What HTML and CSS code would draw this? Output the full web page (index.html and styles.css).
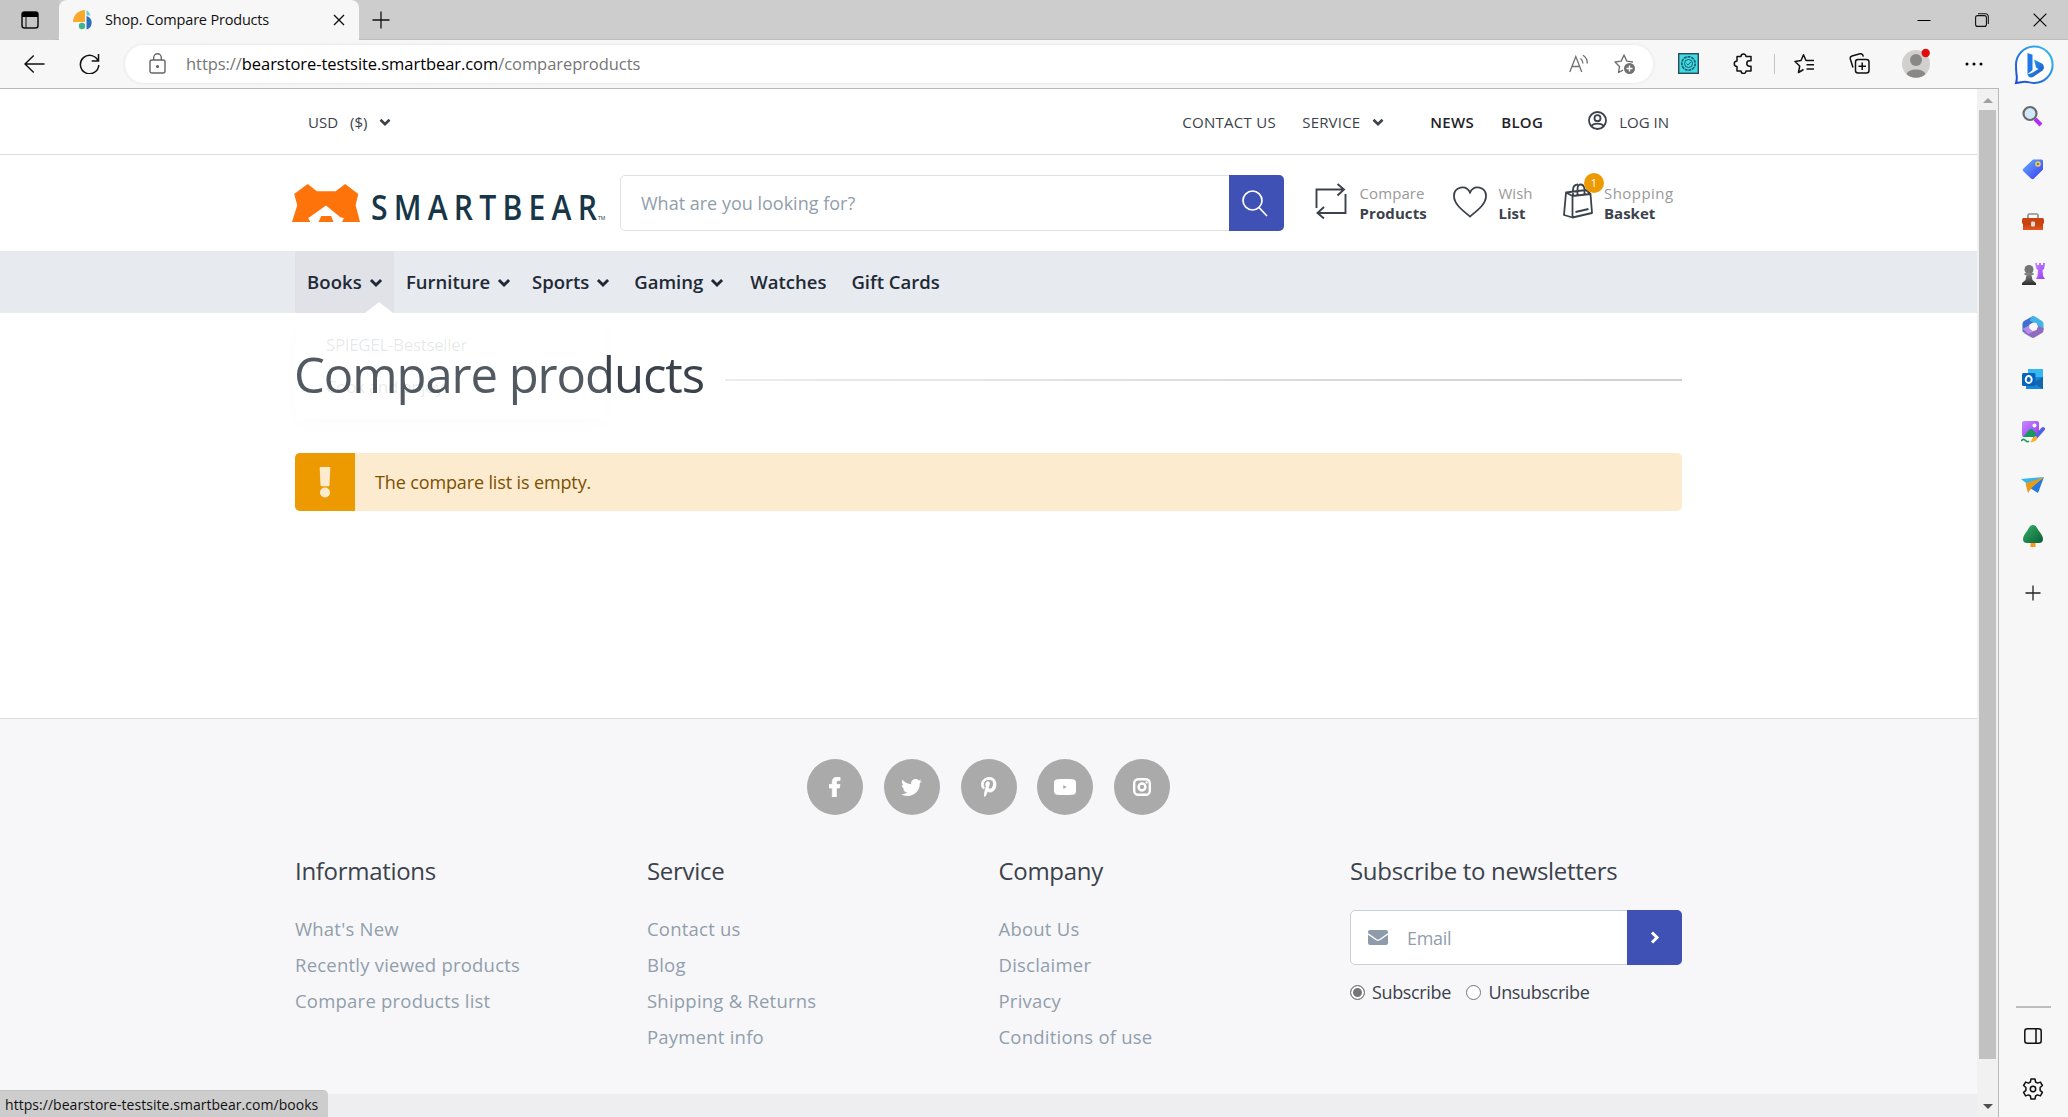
FILE: index.html
```html
<!DOCTYPE html>
<html lang="en">
<head>
<meta charset="utf-8">
<title>Shop. Compare Products</title>
<link rel="stylesheet" href="styles.css">
</head>
<body>
<svg class="defs" aria-hidden="true">
  <defs>
    <symbol id="chev" viewBox="0 0 12 8"><path d="M1.500 1.800 6 6.200l4.500-4.400" fill="none" stroke="currentColor" stroke-width="2.600"/></symbol>
    <linearGradient id="gBing" x1="0" y1="0" x2="1" y2="1"><stop offset="0" stop-color="#1fb6f5"/><stop offset="1" stop-color="#2443c8"/></linearGradient>
    <linearGradient id="gBingRing" x1="1" y1="0" x2="0" y2="1"><stop offset="0" stop-color="#35c3f3"/><stop offset="1" stop-color="#1b48d0"/></linearGradient>
    <linearGradient id="gBlue" x1="0" y1="0" x2="1" y2="1"><stop offset="0" stop-color="#67b4ff"/><stop offset="1" stop-color="#3a36f0"/></linearGradient>
    <linearGradient id="gPurple" x1="0" y1="0" x2="1" y2="1"><stop offset="0" stop-color="#c58bff"/><stop offset="1" stop-color="#9a35f5"/></linearGradient>
    <linearGradient id="gGreen" x1="0" y1="0" x2="1" y2="1"><stop offset="0" stop-color="#35b368"/><stop offset="1" stop-color="#0a5c35"/></linearGradient>
    <linearGradient id="gRed" x1="0" y1="0" x2="0" y2="1"><stop offset="0" stop-color="#b93a0b"/><stop offset="1" stop-color="#e8571d"/></linearGradient>
    <linearGradient id="gGrey" x1="0" y1="0" x2="0" y2="1"><stop offset="0" stop-color="#8a8a8a"/><stop offset="1" stop-color="#2c2c2c"/></linearGradient>
  </defs>
</svg>

<header class="tabstrip">
  <div class="workspace"><svg width="18" height="18" viewBox="0 0 18 18"><rect x="1" y="1" width="16" height="16" rx="2.500" fill="none" stroke="#111" stroke-width="1.500"/><path d="M1 3.500A2.500 2.500 0 0 1 3.500 1h11A2.500 2.500 0 0 1 17 3.500V6H1z"/><path d="M5 6v11" stroke="#111" stroke-width="1"/></svg></div>
  <div class="tab">
    <svg width="20" height="20" viewBox="0 0 20 20"><path d="M12 0v12H0A12 12 0 0 1 12 0z" fill="#fba92c"/><path d="M13.500 0a8 8 0 0 1 4 5.500h-4z" fill="#67cdd8"/><path d="M13.500 6a7 7 0 0 1 0 13.500z" fill="#2c6fbb"/><circle cx="9" cy="16" r="3.200" fill="#41b58a"/></svg>
    <span class="tab-title">Shop. Compare Products</span>
    <svg width="12" height="12" viewBox="0 0 12 12"><path d="m1 1 10 10M11 1 1 11" stroke="#111" stroke-width="1.400"/></svg>
  </div>
  <svg class="newtab" width="18" height="18" viewBox="0 0 18 18"><path d="M9 .5v17M.5 9h17" stroke="#111" stroke-width="1.300"/></svg>
  <div class="window-buttons">
    <svg width="14" height="14" viewBox="0 0 14 14"><path d="M.5 7.500h13" stroke="#000"/></svg>
    <svg width="14" height="14" viewBox="0 0 14 14" fill="none" stroke="#111" stroke-width="1.100"><rect x=".6" y="2.600" width="10.800" height="10.800" rx="2"/><path d="M3 .8h7.500a2.800 2.800 0 0 1 2.800 2.800V11"/></svg>
    <svg width="14" height="14" viewBox="0 0 14 14"><path d="m.6.600 12.800 12.800M13.400.600.600 13.400" stroke="#000" stroke-width="1.100"/></svg>
  </div>
</header>

<div class="toolbar">
  <svg width="21" height="20" viewBox="0 0 21 20" fill="none" stroke="#111" stroke-width="1.400"><path d="M20.500 10H1M9.700 1.500 1 10l8.700 8.500"/></svg>
  <svg class="reload" width="21" height="21" viewBox="0 0 21 21" fill="none" stroke="#111" stroke-width="1.500"><path d="M19.300 8.500a9.200 9.200 0 1 0 .5 3.500M19.500 1v7h-6.800"/></svg>
  <div class="omnibox">
    <svg width="17" height="21" viewBox="0 0 17 21" fill="none" stroke="#666" stroke-width="1.400"><rect x="1" y="7" width="15" height="13" rx="2"/><path d="M4.700 7V4.600a3.800 3.800 0 0 1 7.600 0V7"/><circle cx="8.500" cy="13.500" r=".9" fill="#666"/></svg>
    <span class="url">https://<b>bearstore-testsite.smartbear.com</b>/compareproducts</span>
    <svg width="20" height="20" viewBox="0 0 20 20" fill="none" stroke="#707070" stroke-width="1.300"><path d="m.8 18 6-15.500L12.800 18M3 12.500h7.700M11.500 4.500a6 6 0 0 1 2.500 5M14 1.200a9.500 9.500 0 0 1 4.300 8.300"/></svg>
    <svg class="fav" width="22" height="21" viewBox="0 0 22 21" fill="none" stroke="#707070" stroke-width="1.400" stroke-linejoin="round"><path d="M9 17.200 4.500 19.500l1-6L1 9l6.200-.9L10 2l2.800 6.100L19 9"/><circle cx="15.500" cy="15.500" r="5.500" fill="#707070" stroke="none"/><path d="M15.500 12.500v6M12.500 15.500h6" stroke="#fff"/></svg>
  </div>
  <div class="actions">
    <svg class="ext" width="21" height="21" viewBox="0 0 21 21"><rect x=".7" y=".7" width="19.600" height="19.600" fill="#3fdae2" stroke="#2b4a5c" stroke-width="1.400"/><circle cx="10.500" cy="10.500" r="6.700" fill="none" stroke="#16596a" stroke-width="1.600" stroke-dasharray="3 .8"/><circle cx="10.500" cy="10.500" r="4" fill="none" stroke="#16596a"/><path d="m8.500 10.500 1.500 1.500 2.800-3" fill="none" stroke="#16596a"/></svg>
    <svg class="puzzle" width="21" height="21" viewBox="0 0 21 21" fill="none" stroke="#111" stroke-width="1.500" stroke-linejoin="round"><path d="M8 3.500a2.500 2.500 0 0 1 5 0h5v4.300h-1.500a2.700 2.700 0 0 0 0 5.400H18V18h-5a2.500 2.500 0 0 1-5 0H4v-4.500a2.600 2.600 0 0 1 0-5.500V3.500z"/></svg>
    <i class="divider"></i>
    <svg class="favs" width="21" height="21" viewBox="0 0 21 21" fill="none" stroke="#111" stroke-width="1.500" stroke-linejoin="round"><path d="m9.500 16.500-5 3 1.200-6.500L1 8.500l6-1L9.500 1.800 12 7.500h8M12.500 11.800H20M12.500 16H20"/></svg>
    <svg class="coll" width="21" height="21" viewBox="0 0 21 21" fill="none" stroke="#111" stroke-width="1.500"><rect x="6.500" y="6.500" width="13.500" height="13.500" rx="2.500"/><path d="M13.200 9.500v7.500M9.500 13.200H17M4 14.500 1.300 6A2.500 2.500 0 0 1 3 3l8-2.200a2.400 2.400 0 0 1 3 1.800l.3 1"/></svg>
    <svg class="avatar" width="28" height="30" viewBox="0 0 28 30"><circle cx="14" cy="16" r="14" fill="#d2d0ce"/><circle cx="14" cy="12" r="6" fill="#8a8886"/><path d="M4.500 26a9.800 6 0 0 1 19 0A14 14 0 0 1 4.500 26z" fill="#8a8886"/><circle cx="23.700" cy="5" r="4.200" fill="#e00b0b"/></svg>
    <svg class="dots" width="18" height="4" viewBox="0 0 18 4"><circle cx="2" cy="2" r="1.500"/><circle cx="9" cy="2" r="1.500"/><circle cx="16" cy="2" r="1.500"/></svg>
    <svg class="bing" width="40" height="40" viewBox="0 0 40 40"><path d="M2 38c1-3 1-6 .5-9-.4-3-.5-5-.5-9.500A18.300 18.300 0 1 1 20.500 38c-4 0-8-2-12-1z" fill="#fff" stroke="url(#gBingRing)" stroke-width="2"/><path d="m13.500 8 5 1.700v15.500l-5 3.800z" fill="#1f78e8"/><path d="m20 14.500 8 4c2.500 2 2.500 5 .5 7l-9.500 6.500c-2.500 1.300-5.500-.5-5.500-3 5 0 7-3 11-5l-2.500-1.500z" fill="url(#gBing)"/></svg>
  </div>
</div>

<div class="window">
<main class="page">
  <div class="topbar"><div class="container">
    <span class="currency">USD<span class="symbol">($)</span><svg width="12" height="8"><use href="#chev"/></svg></span>
    <nav class="topnav">
      <a class="t-contact">CONTACT US</a>
      <a class="t-service">SERVICE <svg width="12" height="8"><use href="#chev"/></svg></a>
      <a class="strong t-news">NEWS</a>
      <a class="strong t-blog">BLOG</a>
      <a class="t-login"><svg width="19" height="19" viewBox="0 0 19 19" fill="none" stroke="currentColor" stroke-width="1.800"><circle cx="9.500" cy="9.500" r="8.500"/><circle cx="9.500" cy="7.200" r="3"/><path d="M3.500 15.200c1-2.200 2.800-2.600 6-2.600s5 .4 6 2.600"/></svg>LOG IN</a>
    </nav>
  </div></div>

  <div class="shopbar"><div class="container">
    <div class="logo">
      <svg class="bear" width="68" height="38" viewBox="28 101 156 115" preserveAspectRatio="none"><path fill="#ff730b" d="M64 101 85 123h43l22-22 30 30-6 34 10 51h-41l4-12-8-2-33-36-38 36-3 2 5 12H28l12-51-7-34z"/><path fill="#ff730b" d="M95 198h23l5 18H89z"/></svg>
      <svg class="wordmark" width="236" height="36" viewBox="0 0 236 36"><text class="brand" transform="scale(.9 1)" x="0" y="32" textLength="251">SMARTBEAR</text><text class="tm" x="227" y="32">TM</text></svg>
    </div>
    <div class="search"><span class="placeholder">What are you looking for?</span><span class="search-btn"><svg width="26" height="27" viewBox="0 0 26 27" fill="none" stroke="#fff" stroke-width="1.700"><circle cx="10.500" cy="10.500" r="9.500"/><path d="m17 17.500 8 8.500"/></svg></span></div>
    <div class="tools">
      <a class="tool compare"><svg width="32" height="36" viewBox="0 0 32 36" fill="none" stroke="#3b424b" stroke-width="1.900"><path d="M1.500 25V6.500h27M22.500 1l6.500 5.500-6.500 6M30.500 11v19H3M9 24l-6.500 6L9 35.500"/></svg><span class="label"><small>Compare</small><b>Products</b></span></a>
      <a class="tool wish"><svg width="34" height="32" viewBox="0 0 34 32" fill="none" stroke="#3b424b" stroke-width="1.800"><path d="M17 30.500C9 24 1 18 1 10 1 1 13-2 17 6.500 21-2 33 1 33 10c0 8-8 14-16 20.500z"/></svg><span class="label"><small>Wish</small><b>List</b></span></a>
      <a class="tool basket"><svg width="30" height="36" viewBox="0 0 30 36" fill="none" stroke="#3b424b" stroke-width="1.800" stroke-linejoin="round"><path d="m3 9.500 20-2.500 4.500 4L29 30 9.500 34.500 1 32zM3 9.500l6.500 3.500V34.500M9.500 13l18-2M10 12V7c0-4 2-5.500 5-5.500M14.500 12V6c0-6 6-6 7 0v5M12.500 29l13-3"/></svg><span class="label"><small>Shopping</small><b>Basket</b></span><i class="badge">1</i></a>
    </div>
  </div></div>

  <nav class="menu"><div class="container">
    <div class="menu-item active">Books<svg width="14" height="9"><use href="#chev"/></svg>
      <i class="caret"></i>
      <div class="dropdown"><span>SPIEGEL-Bestseller</span><span>Cook and enjoy</span></div>
    </div>
    <div class="menu-item furniture">Furniture<svg width="14" height="9"><use href="#chev"/></svg></div>
    <div class="menu-item">Sports<svg width="14" height="9"><use href="#chev"/></svg></div>
    <div class="menu-item">Gaming<svg width="14" height="9"><use href="#chev"/></svg></div>
    <div class="menu-item watches">Watches</div>
    <div class="menu-item gift">Gift Cards</div>
  </div></nav>

  <section class="content container">
    <div class="heading"><h1>Compare products</h1><i class="rule"></i></div>
    <div class="alert"><span class="alert-icon"><svg width="12" height="32" viewBox="0 0 12 32" fill="#fdebcf"><path d="M1.700 1h8.600a1 1 0 0 1 1 1l-.8 17a1.200 1.200 0 0 1-1.200 1.200H2.700A1.200 1.200 0 0 1 1.500 19L.7 2a1 1 0 0 1 1-1z"/><circle cx="6" cy="26.500" r="5"/></svg></span><span class="alert-text">The compare list is empty.</span></div>
  </section>

  <footer class="footer">
    <div class="social">
      <span><svg width="12" height="20" viewBox="0 0 12 20"><path d="M3.300 20v-9H0V7.500h3.300V5C3.300 1.800 5.200 0 8.200 0c1.400 0 2.900.3 2.900.3v3.100H9.500C7.900 3.400 7.400 4.400 7.400 5.400v2.100H11L10.400 11H7.400v9z" stroke="#fff" stroke-width=".7"/></svg></span>
      <span><svg width="21" height="17" viewBox="0 0 21 17"><path d="M18.800 4.300C19 12 13 17 6.500 17 4 17 1.800 16.300 0 15.100c2.200.2 4.400-.4 6.200-1.800-1.800 0-3.400-1.300-4-3 .7.100 1.200.1 1.900-.1C2.200 9.800.8 8.100.8 6c.6.300 1.300.5 1.900.5C.9 5.200.3 2.800 1.500.8c2.200 2.700 5.300 4.300 8.800 4.400C9.600 2.300 11.800 0 14.500 0c1.200 0 2.300.5 3.100 1.400C18.600 1.200 19.500.8 20.300.3c-.3 1-1 1.800-1.800 2.400.8-.1 1.700-.3 2.400-.7-.5.900-1.300 1.700-2.100 2.300z"/></svg></span>
      <span><svg width="16" height="20" viewBox="0 0 16 20" stroke="#fff" stroke-width=".9"><path d="M8.500.4C4.200.4.500 3.200.5 7.500c0 3 1.400 4.300 2.200 4.300.4 0 .6-1 .6-1.300 0-.4-1-1.200-1-2.900 0-3.400 2.600-5.300 5.700-5.300 2.800 0 4.500 1.600 4.500 4.200 0 2-.8 5.600-3.400 5.600-.9 0-1.700-.7-1.700-1.600 0-1.400 1-2.700 1-4.200 0-2.500-3.600-2.100-3.600 1.200 0 .7.100 1.400.4 2-.6 2.400-1.700 6-1.700 8.500 0 .6.100 1.100.2 1.500 1.800-2.400 1.900-2.500 2.700-5.800.5.800 1.600 1.300 2.600 1.300 4 0 5.900-3.900 5.900-7.500C15 2.700 11.900.4 8.500.4z"/></svg></span>
      <span><svg width="22" height="16" viewBox="0 0 22 16"><path fill-rule="evenodd" d="M3.500.3C8 0 14 0 18.500.3 20.800.4 21.800 1.500 22 3.500c.2 3 .2 6 0 9-.2 2-1.200 3.100-3.500 3.200-4.500.3-10.500.3-15 0C1.200 15.600.2 14.500 0 12.500-.2 9.500-.2 6.500 0 3.500.2 1.500 1.200.4 3.500.3zM9.300 6v4L12.700 8z"/></svg></span>
      <span><svg width="18" height="18" viewBox="0 0 18 18"><rect x="1.200" y="1.200" width="15.600" height="15.600" rx="4" fill="none" stroke="#fff" stroke-width="2.400"/><circle cx="9" cy="9" r="3.400" fill="none" stroke="#fff" stroke-width="2.500"/><circle cx="13.600" cy="4.400" r="1.200"/></svg></span>
    </div>
    <div class="columns container">
      <div class="col"><h3>Informations</h3><a>What's New</a><a>Recently viewed products</a><a>Compare products list</a></div>
      <div class="col"><h3>Service</h3><a>Contact us</a><a>Blog</a><a>Shipping &amp; Returns</a><a>Payment info</a></div>
      <div class="col"><h3>Company</h3><a>About Us</a><a>Disclaimer</a><a>Privacy</a><a>Conditions of use</a></div>
      <div class="col news"><h3>Subscribe to newsletters</h3>
        <div class="email"><svg width="20" height="15" viewBox="0 0 20 15"><rect width="20" height="15" rx="2" fill="#8d9bab"/><path d="m0 3.800 8 5.700c1.500 1 2.500 1 4 0l8-5.700" fill="none" stroke="#fff" stroke-width="1.400"/></svg><span>Email</span><i class="go"><svg width="10" height="13" viewBox="0 0 10 13"><path d="m2 1.500 5 5-5 5" fill="none" stroke="#fff" stroke-width="3"/></svg></i></div>
        <div class="radios"><i class="radio on"></i><span>Subscribe</span><i class="radio second"></i><span>Unsubscribe</span></div>
      </div>
    </div>
    <div class="bottom"></div>
  </footer>
  <div class="status">https://bearstore-testsite.smartbear.com/books</div>
</main>

<div class="scrollbar"><i class="up"></i><i class="thumb"></i><i class="down"></i></div>

<aside class="sidebar">
  <svg width="22" height="22" viewBox="0 0 22 22"><path d="m13 14 6 6" stroke="#b32df2" stroke-width="4"/><circle cx="8" cy="8.500" r="6.500" fill="#cfe9fb" stroke="#6a6a6a" stroke-width="2.200"/></svg>
  <svg class="tag" width="22" height="22" viewBox="0 0 22 22"><path d="M11 1.500h8.500A1.500 1.500 0 0 1 21 3v8.500L12 20.500c-1 1-2 1-3 0l-7.500-7c-1-1-1-2 0-3z" fill="url(#gBlue)"/><circle cx="16" cy="6" r="2" fill="none" stroke="#ffd43a" stroke-width="1.500"/></svg>
  <svg width="24" height="22" viewBox="0 0 24 22"><path d="M7 8V5.500A1.500 1.500 0 0 1 8.500 4h7A1.500 1.500 0 0 1 17 5.500V8" fill="none" stroke="#8d8d8d" stroke-width="1.700"/><path d="M2 12h20v8H2z" fill="url(#gRed)"/><rect x="1" y="8" width="22" height="6" rx="1.500" fill="#c8430f"/><rect x="10" y="11.500" width="4" height="5" rx="1" fill="#ddd"/></svg>
  <svg width="24" height="24" viewBox="0 0 24 24"><path d="M14 1h2v2h2V1h2v2h2V1h2l-1 6-1.500 1 .5 6 2 3h-9l1.500-3 .5-6-1.500-1z" fill="url(#gPurple)"/><circle cx="8" cy="7.500" r="4.500" fill="#757575"/><path d="M3.500 11h9v2h-2l1 5 3.500 3v2H1v-2l3.500-3 1-5h-2z" fill="url(#gGrey)"/></svg>
  <svg width="22" height="22" viewBox="0 0 22 22"><path d="M11 0 2 5Q.5 6 .5 7.500v8L7 18V9l6-3.500z" fill="#3f6fd0"/><path d="m9 1 2-1q1 0 2 .5l7 4.500q1.500 1 1.500 2.500V14L15 10V7.500L8 5z" fill="#45b2e8"/><path d="M21.500 12v2.500q0 1.500-1.500 2.500l-7.500 4.500q-1.500.8-3 0L1 16.500l7-1 6-1.500 2-4z" fill="#8e6bc0"/><path d="m.5 13 6 5 6-3-5-3V9z" fill="#b58be6"/><path d="m8.500 8 4-1 3.500 3-1.500 4-4 1L7 12z" fill="#f7f7f7"/></svg>
  <svg width="22" height="22" viewBox="0 0 22 22"><rect x="6" y="1" width="15" height="10" fill="#35b7f1"/><rect x="4" y="9" width="17" height="12" fill="#1687d9"/><path d="m21 9-10 6 10 6z" fill="#1266ad"/><rect y="5" width="13.500" height="13" rx="1.500" fill="#0864bb"/><ellipse cx="6.700" cy="11.500" rx="3" ry="3.500" fill="none" stroke="#fff" stroke-width="1.900"/></svg>
  <svg width="24" height="24" viewBox="0 0 24 24"><rect x="1" y="1" width="17" height="16" rx="2" fill="url(#gPurple)"/><path d="m2 17 6-7c1.500-1.500 3-1 4 0l5 5-3 2z" fill="#16995c"/><circle cx="13.500" cy="5.500" r="2" fill="#fff"/><path d="m22 9-8 9" stroke="#5260e6" stroke-width="4" stroke-linecap="round"/><path d="M15 16c3 2 0 7-6 6 2-1 2-5 6-6z" fill="#fbb321"/><path d="M0 21c3-3 4-1 5 0s2 1 3 0" fill="none" stroke="#16995c" stroke-width="1.600"/></svg>
  <svg class="plane" width="24" height="20" viewBox="0 0 24 20"><path d="m0 4 23-2L7 9.500z" fill="#38b4f1"/><path d="m23 2-6 16-8-5z" fill="#2479df"/><path d="M23 2 4.500 8.500 7 18l3.500-5z" fill="#e89b17"/></svg>
  <svg width="22" height="22" viewBox="0 0 22 22"><rect x="8.500" y="15" width="5" height="7" fill="#f59a1c"/><path d="M11 0c3 0 4 3 6 6s4 5 4 8-2 4-4 4H5c-2 0-4-1-4-4s2-5 4-8 3-6 6-6z" fill="url(#gGreen)"/></svg>
  <svg class="plus" width="16" height="16" viewBox="0 0 16 16"><path d="M8 .5v15M.5 8h15" stroke="#222" stroke-width="1.300"/></svg>
  <div class="side-bottom">
    <i class="side-rule"></i>
    <svg width="18" height="16" viewBox="0 0 18 16" fill="none" stroke="#111" stroke-width="1.500"><rect x=".8" y=".8" width="16.400" height="14.400" rx="2.500"/><path d="M12 1v14"/></svg>
    <svg class="gear" width="22" height="22" viewBox="0 0 22 22" fill="none" stroke="#111" stroke-width="1.500" stroke-linejoin="round"><path d="M9 1h4l.6 3 1.900 1.100 2.900-1 2 3.400-2.300 2v2.900l2.300 2-2 3.500-2.900-1-1.900 1.100L13 21H9l-.6-3-1.900-1.100-2.900 1-2-3.500 2.300-2V9.500l-2.300-2 2-3.400 2.900 1L8.400 4z"/><circle cx="11" cy="11" r="2.700"/></svg>
  </div>
</aside>
</div>
</body>
</html>
```
FILE: styles.css
```css
* { box-sizing: border-box; }
body {
  margin: 0;
  height: 1117px;
  overflow: hidden;
  display: flex;
  flex-direction: column;
  font-family: "Open Sans", "Noto Sans", sans-serif;
  font-size: 18px;
  color: #3b424b;
  background: #f7f7f7;
}
svg { display: block; flex: none; }
i { font-style: normal; display: block; }
.defs { position: absolute; width: 0; height: 0; }

/* browser frame */
.tabstrip { height: 40px; flex: none; display: flex; align-items: center; background: #cdcdcd; border-bottom: 1px solid #bdbdbd; }
.workspace { width: 59px; height: 40px; padding: 11px 0 0 21px; border-radius: 0 0 6px 0; background: #c6c6c6; }
.tab { width: 300px; height: 41px; padding: 0 14px 2px 14px; display: flex; align-items: center; background: #f7f7f7; border-radius: 8px 8px 0 0; align-self: flex-start; }
.tab-title { flex: 1; margin-left: 12px; font-size: 14.500px; letter-spacing: -.19px; color: #111; white-space: nowrap; }
.newtab { margin-left: 13px; }
.window-buttons { margin-left: auto; padding-right: 21px; display: flex; gap: 44px; }
.toolbar { height: 48px; flex: none; display: flex; align-items: center; padding: 0 0 1px 24px; }
.reload { margin-left: 34px; }
.omnibox { width: 1528px; height: 38px; margin-left: 25px; padding: 0 17px 0 24px; display: flex; align-items: center; background: #fff; border-radius: 19px; box-shadow: 0 0 4px rgba(0,0,0,.08); }
.url { flex: 1; margin-left: 20px; font-size: 16.500px; letter-spacing: -.06px; color: #767676; }
.url b { font-weight: 400; color: #000; }
.fav { margin-left: 25px; }
.actions { display: flex; align-items: center; }
.ext { margin-left: 25px; }
.puzzle { margin-left: 34px; }
.divider { width: 1px; height: 20px; margin-left: 20px; background: #c5c5c5; }
.favs { margin-left: 19px; }
.coll { margin-left: 34px; }
.avatar { margin-left: 32px; margin-top: -1px; }
.dots { margin-left: 35px; }
.bing { margin-left: 31px; margin-top: 2px; }
.window { flex: 1; min-height: 0; display: flex; }

/* page */
.page { position: relative; width: 1977px; flex: none; background: #fff; border-top: 1px solid #b9b9b9; overflow: hidden; }
.container { width: 1387px; margin-left: 295px; }
.topbar { height: 66px; border-bottom: 1px solid #dadbdd; font-size: 15px; }
.topbar .container { height: 65px; display: flex; justify-content: space-between; align-items: center; padding: 0 13px; }
.currency, .topnav, .topnav a { display: flex; align-items: center; white-space: nowrap; }
.currency svg { margin-left: 12px; }
.symbol { margin-left: 12px; }
.t-contact { width: 120px; letter-spacing: .3px; }
.t-service { width: 128px; letter-spacing: .2px; }
.t-service svg { margin-left: 12px; }
.strong { font-weight: 600; color: #1f2226; letter-spacing: .3px; }
.t-news { width: 71px; }
.t-blog { width: 87px; }
.t-login svg { margin: -3px 12px 0 0; }

.shopbar .container { height: 96px; display: flex; align-items: center; }
.logo { width: 325px; flex: none; display: flex; margin-left: -3px; }
.bear { margin-top: 2px; }
.wordmark { margin-left: 11px; margin-top: 6px; overflow: visible; }
.brand { font-size: 33.500px; font-weight: 600; fill: #173647; }
.tm { font-size: 5px; fill: #173647; }
.search { width: 664px; height: 56px; flex: none; margin-left: 3px; display: flex; align-items: center; border: 1px solid #dee0e3; border-radius: 5px; }
.placeholder { flex: 1; padding-left: 20px; color: #919eac; white-space: nowrap; }
.search-btn { width: 55px; height: 56px; margin-right: -1px; padding-right: 3px; display: flex; align-items: center; justify-content: center; background: #3f51b5; border-radius: 0 5px 5px 0; }
.tools { display: flex; }
.tool { position: relative; height: 40px; display: flex; font-size: 15px; line-height: 20px; }
.label { display: flex; flex-direction: column; }
.label small { font-size: 15px; color: #999; }
.label b { font-weight: 700; }
.compare { margin-left: 31px; width: 138px; }
.compare .label { margin-left: 12.500px; }
.compare .label b, .compare small { letter-spacing: .1px; }
.wish { width: 110px; }
.wish svg { margin-top: 3px; }
.wish .label { margin-left: 11.500px; }
.basket .label { margin-left: 11px; }
.basket small { letter-spacing: .45px; }
.badge { position: absolute; left: 21px; top: -10px; width: 20px; height: 20px; border-radius: 50%; background: #ed9a00; color: #fff; font-size: 11px; line-height: 20px; text-align: center; }

.menu { height: 62px; background: #e7eaee; }
.menu .container { height: 62px; display: flex; }
.menu-item { position: relative; height: 62px; padding: 0 12px 2px; display: flex; align-items: center; font-size: 18.500px; font-weight: 600; color: #212936; white-space: nowrap; }
.menu-item svg { margin: 2px 0 0 7px; }
.active { width: 99px; letter-spacing: .1px; background: #e0e2e7; }
.furniture { width: 126px; }
.watches { margin-left: 2px; }
.gift { margin-left: 1px; }
.caret { position: absolute; left: 70px; bottom: 0; border: 14px solid transparent; border-top: 0; border-bottom: 11px solid #fff; }
.dropdown { position: absolute; left: 0; top: 62px; z-index: 2; width: 312px; height: 106px; padding: 11px 31px; background: rgba(255,255,255,.12); box-shadow: 0 8px 20px rgba(0,0,0,.012); display: flex; flex-direction: column; font-size: 17px; font-weight: 400; line-height: 42px; letter-spacing: -.35px; color: rgba(60,66,75,.13); }

.content { height: 405px; padding-top: 25px; }
.heading { display: flex; align-items: center; height: 72px; }
h1 { margin: 0 0 0 -1px; font-size: 49px; font-weight: 400; line-height: 72px; letter-spacing: -1.060px; white-space: nowrap; }
.rule { flex: 1; height: 2px; margin: 11px 0 0 21px; background: linear-gradient(to right, #ebecec, #cfcfcf); }
.alert { height: 58px; margin-top: 43px; display: flex; border-radius: 5px; overflow: hidden; background: #fcebcf; color: #7b5000; }
.alert-icon { width: 60px; display: flex; align-items: center; justify-content: center; background: #ed9a00; }
.alert-text { margin-left: 20px; line-height: 58px; letter-spacing: -.13px; }

.footer { height: 400px; background: #f7f7f9; border-top: 1px solid #dadde0; }
.social { display: flex; justify-content: center; gap: 20.600px; padding-top: 40px; }
.social span { width: 56px; height: 56px; display: flex; align-items: center; justify-content: center; border-radius: 50%; background: #aaa; }
.social svg { fill: #fff; }
.columns { height: 279px; padding-top: 36px; display: grid; grid-template-columns: 352px 351.500px 351.500px 332px; }
.col { display: flex; flex-direction: column; }
.col a { color: #919eac; font-size: 18.500px; line-height: 36px; letter-spacing: .22px; }
h3 { margin: 0 0 20px; font-size: 24px; font-weight: 400; line-height: 40px; letter-spacing: -.3px; white-space: nowrap; }
.email { height: 55px; flex: none; display: flex; align-items: center; padding-left: 17px; background: #fff; border: 1px solid #c9d0da; border-radius: 5px; color: #919eac; }
.email span { flex: 1; margin-left: 19px; letter-spacing: -.3px; }
.go { width: 55px; height: 55px; margin-right: -1px; display: flex; align-items: center; justify-content: center; background: #3f51b5; border-radius: 0 5px 5px 0; }
.radios { display: flex; align-items: center; margin-top: 15px; letter-spacing: -.36px; }
.radios span { margin-left: 7px; }
.radio { width: 15px; height: 15px; border: 1.500px solid #767676; border-radius: 50%; background: #fff; }
.on { background: #767676; box-shadow: inset 0 0 0 2px #fff; }
.second { margin-left: 15.500px; }
.news h3 { margin-bottom: 19px; }
.bottom { height: 24px; background: #eeeef0; }
.status { position: absolute; left: 0; bottom: 0; width: 328px; height: 27px; padding-left: 5px; background: #cdcdcd; border-top: 1px solid #c4c4c4; border-radius: 0 5px 0 0; font-size: 14px; line-height: 27px; letter-spacing: .04px; color: #111; white-space: nowrap; }

.scrollbar { width: 22px; flex: none; display: flex; flex-direction: column; align-items: center; background: #f1f1f1; border-top: 1px solid #b9b9b9; border-right: 1px solid #b9b9b9; padding: 9px 0 8px; }
.up { border: 5px solid transparent; border-top: 0; border-bottom-color: #a0a0a0; }
.thumb { width: 17px; height: 949px; margin-top: 7px; background: #c1c1c1; }
.down { margin-top: auto; border: 5px solid transparent; border-bottom: 0; border-top-color: #505050; }
.sidebar { flex: 1; display: flex; flex-direction: column; align-items: center; padding: 17px 1px 17px 0; gap: 30px; }
.tag, .plane { margin-top: 1px; }
.plus { margin-top: 8px; }
.side-bottom { margin-top: auto; display: flex; flex-direction: column; align-items: center; }
.side-rule { width: 35px; height: 2px; margin-bottom: 20px; background: #bdbdbd; }
.gear { margin-top: 34px; }
```
